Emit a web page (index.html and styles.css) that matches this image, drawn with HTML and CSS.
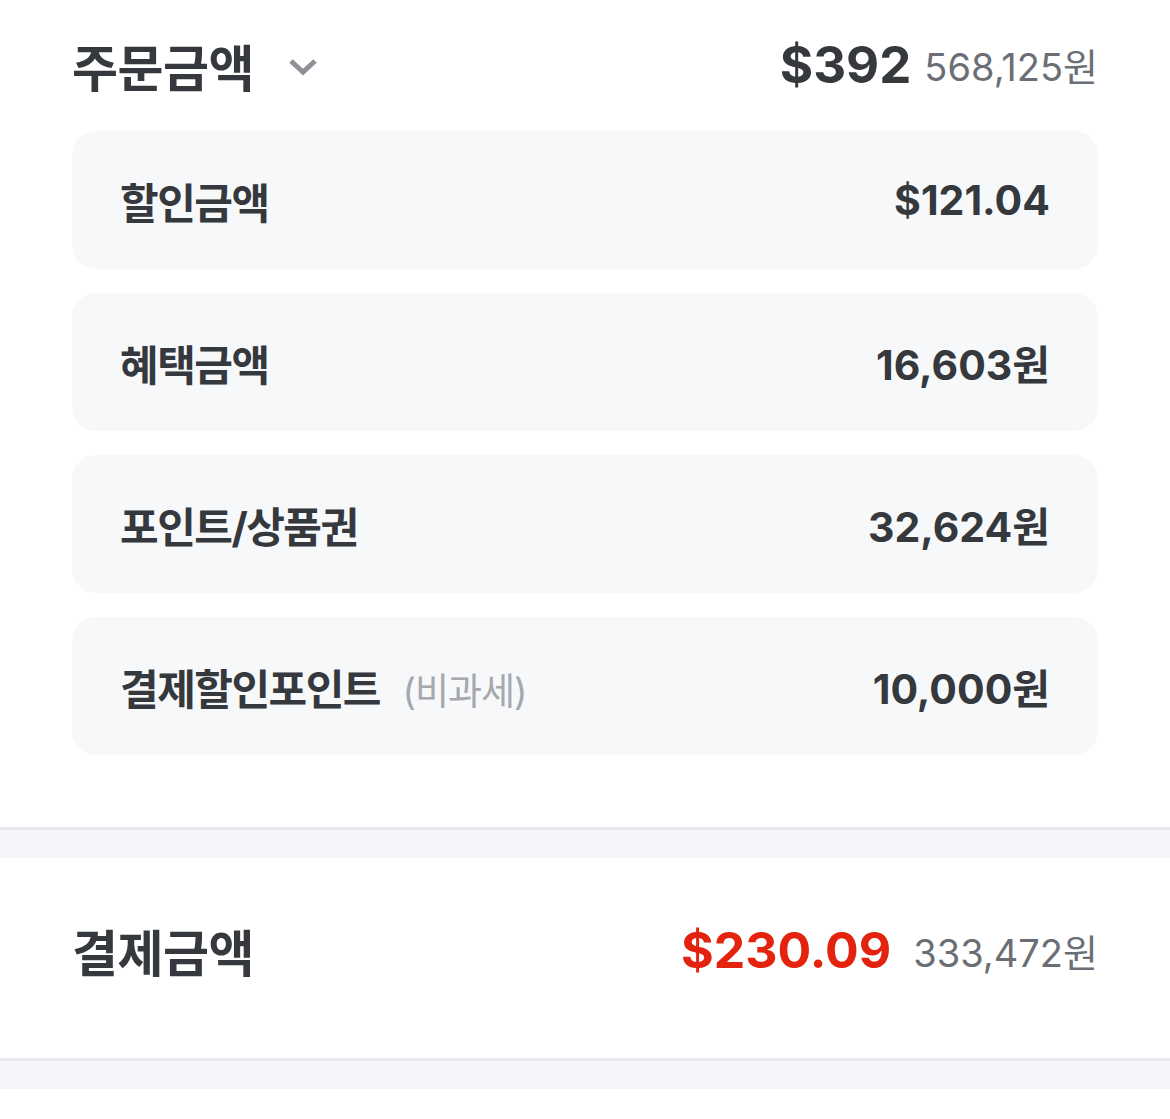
FILE: index.html
```html
<!doctype html>
<html lang="ko">

<head>
    <meta charset="utf-8" />
    <title>결제 정보</title>
    <link rel="stylesheet" href="styles.css">
</head>

<body>
    <section class="summary">
        <div class="summary__head">
            <div class="summary__title">
                <h2>주문금액</h2>
                <svg class="chevron" width="30" height="20" viewBox="0 0 30 20">
                    <path d="M3 4 L15 15 L27 4" fill="none" stroke="#8e9196" stroke-width="5" />
                </svg>
            </div>
            <div class="price">
                <span class="price__usd">$392</span>
                <span class="price__krw">568,125원</span>
            </div>
        </div>

        <ul class="rows">
            <li class="row">
                <span class="row__label">할인금액</span>
                <span class="row__value">$121.04</span>
            </li>
            <li class="row">
                <span class="row__label">혜택금액</span>
                <span class="row__value">16,603원</span>
            </li>
            <li class="row">
                <span class="row__label">포인트/상품권</span>
                <span class="row__value">32,624원</span>
            </li>
            <li class="row">
                <span class="row__label">결제할인포인트 <small>(비과세)</small></span>
                <span class="row__value">10,000원</span>
            </li>
        </ul>
    </section>

    <div class="divider"></div>

    <section class="total">
        <h2>결제금액</h2>
        <div class="price price--total">
            <span class="price__usd price__usd--red">$230.09</span>
            <span class="price__krw">333,472원</span>
        </div>
    </section>

    <div class="divider"></div>
</body>

</html>
```

FILE: styles.css
```css
* {
    box-sizing: border-box;
    font-family: Inter, 'Noto Sans CJK KR', sans-serif;
}

html,
body {
    margin: 0;
    padding: 0;
    background: #ffffff;
    color: #35383c;
}

h2 {
    margin: 0;
    font-size: 50px;
    font-weight: bold;
    letter-spacing: -0.5px;
}

.summary {
    padding: 0 72px 72px;
}

.summary__head {
    height: 131px;
    display: flex;
    align-items: center;
    justify-content: space-between;
    padding-bottom: 2px;
}

.summary__title {
    display: flex;
    align-items: center;
    gap: 34px;
}

.chevron {
    margin-top: 4px;
}

.price {
    display: flex;
    align-items: center;
    gap: 13px;
}

.price--total {
    gap: 22px;
}

.price__usd {
    font-size: 51px;
    font-weight: bold;
    letter-spacing: 0;
}

.price__usd--red {
    color: #e4230e;
    font-size: 50px;
}

.price__krw {
    font-size: 38px;
    color: #6b6f75;
}

.rows {
    list-style: none;
    margin: 0;
    padding: 0;
    display: flex;
    flex-direction: column;
    gap: 24px;
}

.row {
    height: 138px;
    padding: 0 48px;
    display: flex;
    align-items: center;
    justify-content: space-between;
    background: #f7f8fa;
    border-radius: 24px;
}

.row__label {
    font-size: 42px;
    font-weight: bold;
    letter-spacing: -1.5px;
}

.row__label small {
    margin-left: 14px;
    font-size: 37px;
    font-weight: normal;
    color: #a5a8ac;
    letter-spacing: -1px;
}

.row__value {
    font-size: 41px;
    font-weight: bold;
}

.divider {
    height: 31px;
    background: #f5f6f9;
    border-top: 3px solid #e8eaef;
}

.total {
    height: 200px;
    padding: 0 72px 16px;
    display: flex;
    align-items: center;
    justify-content: space-between;
}
```
